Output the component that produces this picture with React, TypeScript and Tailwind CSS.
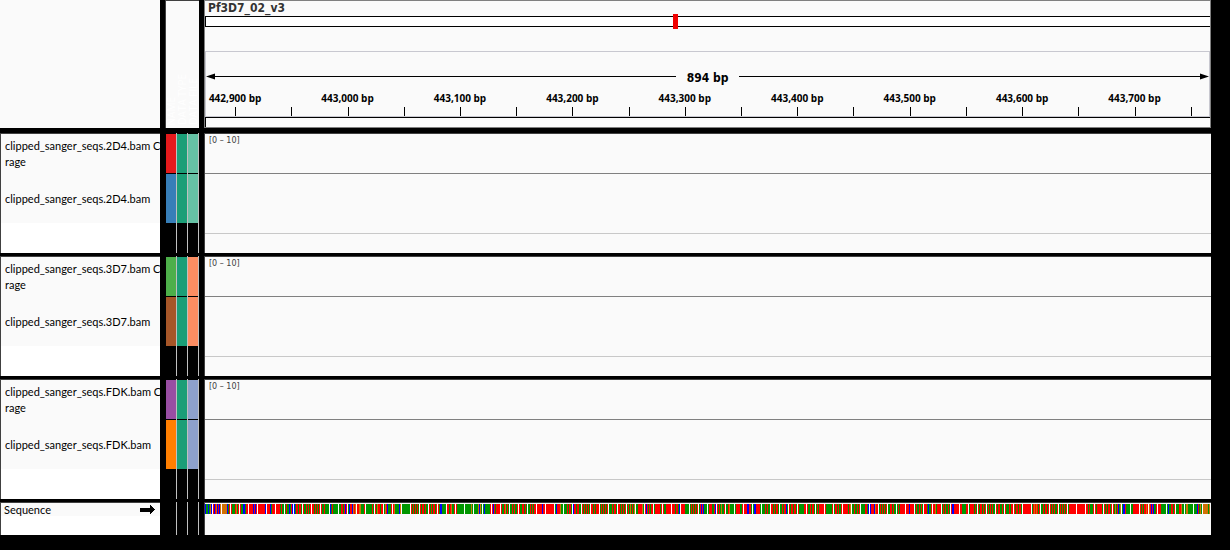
const sequence =
  'CAACAGC TCTGCTCG GGGGGCAT TAAATGAT TAACCATT TTTTCTCT TTTTTTTC TTTCATTT TTTTATAA ATAACATC ' +
  'CATTATTA TAATATAT TTATATAT TAATAAAA CATAAAAA AATTATCT ACTTCGTG TTGGAAAT AAAAAATA TAGTTATT ' +
  'AGTCAAAT TGAAAACG AAAAAAAA TATATATA TATTATAA TATATTAT TACCAAAA TTATGAAT TAAAAAAA AAAAAAGA ' +
  'AAAAGCGA ACAAAAAT TCTATTTT TAATGATA AATATAAT TAATTATA AATATATT TTTTTCTT TTTTTTTT ACTTTGAA ' +
  'AAATATTA CTTATTAA TATATATA TTATATTT ATATATAT AAATATTA TTATATAT ATAGATAG AATTTTGA TCTATATT ' +
  'ATTTTTAT TAATTTTT TTTATTAC TTTTAAAA ATATATAT ATCTCAAA ATTTAATC TATAGAAT AATGAAAA ATTTTAAT ' +
  'TTTCCTTA ACCTTTTA AAATATAA TTATATTA AATATTCA TATTATTA TAAAAATT TAATATTA ATATTTTT TAAAAAAT ' +
  'ATTATAAT TTTTTATG AATAATAT AAAATTAC CTTTCGTT ATATATAT AATTATAA ATATTTTT TTTCTTTT ATAATATA ' +
  'TTTACAAT TTGATTTT ATATAATA TCCTTTTT TTAAAATT ATTTTATA TATTATAT ATATATAA TATTAATA TAAATATT ' +
  'TATTATTA TTTTTTTT ATGTGTAT AATATTAT TATATAAT ATATATAT ATTTTTTT TTTTTTTT TTATAAAT TATTTTTA ' +
  'TATATTAT TAGATCAG ACCTAAAA AATTTTTT TATATTGT GTCTCAAT TTTAAAAA ACAATTAT AAATTGAA AGGAAAAA ' +
  'AAACTAGA GGGGGAG';

const baseColors: Record<string, string> = {
  A: '#009600',
  C: '#0000ff',
  G: '#d17105',
  T: '#ff0000',
  ' ': '#ffffff',
};

const axisLabels = [
  '442,900 bp', '443,000 bp', '443,100 bp', '443,200 bp', '443,300 bp',
  '443,400 bp', '443,500 bp', '443,600 bp', '443,700 bp',
];

const majorTick = (i: number) => `${(2.9 + i * 11.21).toFixed(2)}%`;
const minorTick = (i: number) => `${(8.5 + i * 11.21).toFixed(2)}%`;

type Sample = { file: string; coverage: string; reads: string; sample: string };

const samples: Sample[] = [
  { file: 'clipped_sanger_seqs.2D4.bam', coverage: 'bg-[#e41a1c]', reads: 'bg-[#377eb8]', sample: 'bg-[#66c2a5]' },
  { file: 'clipped_sanger_seqs.3D7.bam', coverage: 'bg-[#4daf4a]', reads: 'bg-[#a65628]', sample: 'bg-[#fc8d62]' },
  { file: 'clipped_sanger_seqs.FDK.bam', coverage: 'bg-[#984ea3]', reads: 'bg-[#ff7f00]', sample: 'bg-[#8da0cb]' },
];

const row = 'grid grid-cols-[160px_34px_minmax(0,1fr)] gap-x-[5px]';

function AttributeColumn({ colors }: { colors: string[] }) {
  return (
    <div className="flex flex-1 flex-col border-r border-[#c0c0c0] pt-px">
      {colors.length > 0 && <div className={`h-[39px] ${colors[0]}`} />}
      {colors.length > 0 && <div className={`mt-px h-[49px] ${colors[1]}`} />}
    </div>
  );
}

function Header() {
  return (
    <header className={`${row} h-[128px]`}>
      <div className="bg-[#fafafa]" />
      <div className="flex items-end border-l border-t border-[#404040] bg-[#fafafa] pb-[3px] text-[10px] leading-[11px] text-white">
        {['NAME', 'DATA TYPE', 'DATA FILE'].map((name) => (
          <div key={name} className="w-[11px] rotate-180 whitespace-nowrap [writing-mode:vertical-rl]">
            {name}
          </div>
        ))}
      </div>
      <div className="flex flex-col border border-[#808080] bg-[#fafafa]">
        <h1 className="h-[15px] pl-[3px] text-[12px] leading-[15px] font-bold text-[#333] [font-family:'DejaVu_Sans_Condensed','DejaVu_Sans',sans-serif]">
          Pf3D7_02_v3
        </h1>
        <div className="relative h-[11px] border-y border-l border-black bg-white">
          <div className="absolute -top-[3px] left-[46.5%] h-[15px] w-[5px] bg-[#f00000]" />
        </div>
        <div className="mt-6 h-[66px] border border-[#c8c8d0] pt-4">
          <div className="flex h-[17px] items-center text-[12px] font-bold">
            <svg className="h-[7px] w-[9px]" viewBox="0 0 9 7"><path d="M0 3.5 9 0.5v6Z" /></svg>
            <div className="h-px flex-1 bg-black" />
            <div className="w-[63px] pt-[3px] text-center leading-[17px] [font-family:'DejaVu_Sans_Condensed','DejaVu_Sans',sans-serif]">
              894 bp
            </div>
            <div className="h-px flex-1 bg-black" />
            <svg className="h-[7px] w-[9px]" viewBox="0 0 9 7"><path d="M9 3.5 0 0.5v6Z" /></svg>
          </div>
          <svg className="block h-[31px] w-full text-[10px] font-bold" shapeRendering="crispEdges">
            {axisLabels.map((label, i) => (
              <g key={label}>
                <text x={majorTick(i)} y="17" textAnchor="middle">{label}</text>
                <rect x={majorTick(i)} y="22" width="1" height="9" />
                <rect x={minorTick(i)} y="22" width="1" height="9" />
              </g>
            ))}
          </svg>
        </div>
        <div className="flex-1 border-l border-t border-black" />
      </div>
    </header>
  );
}

function SamplePanel({ file, coverage, reads, sample }: Sample) {
  return (
    <section className={`${row} h-[120px]`}>
      <div className="overflow-hidden border-l border-t border-[#404040] bg-white text-[11px] leading-4 whitespace-nowrap [font-family:Lato,sans-serif]">
        <div className="h-10 bg-[#fafafa] pt-1 pl-1">
          <div>{file} C</div>
          <div>rage</div>
        </div>
        <div className="flex h-[49px] items-center bg-[#fafafa] pl-1">{file}</div>
      </div>
      <div className="flex pl-px">
        <AttributeColumn colors={[coverage, reads]} />
        <AttributeColumn colors={['bg-[#1b9e77]', 'bg-[#1b9e77]']} />
        <AttributeColumn colors={[sample, sample]} />
      </div>
      <div className="border-l border-t border-[#404040] bg-[#fafafa]">
        <div className="h-10 border-b border-[#808080] pt-px pl-1 text-[8px] leading-[12px] text-[#404040] [font-family:'DejaVu_Sans',sans-serif]">
          [0 – 10]
        </div>
        <div className="h-[60px] border-b border-[#c8c8c8]" />
      </div>
    </section>
  );
}

function SequencePanel() {
  return (
    <section className={`${row} h-[33px]`}>
      <div className="border-l border-t border-[#404040] bg-white">
        <div className="flex h-[13px] items-center justify-between bg-[#fafafa] pr-[5px] pl-[3px] text-[11px] leading-[13px] [font-family:Lato,sans-serif]">
          Sequence
          <svg className="h-[9px] w-[15px]" viewBox="0 0 15 9" shapeRendering="crispEdges">
            <path d="M0 2.5H10V0L15 4.5 10 9V6.5H0Z" />
          </svg>
        </div>
      </div>
      <div className="flex pl-px">
        <AttributeColumn colors={[]} />
        <AttributeColumn colors={[]} />
        <AttributeColumn colors={[]} />
      </div>
      <div className="border-l border-t border-[#404040] bg-[#fafafa] pt-px pr-px">
        <svg
          className="block h-[10px] w-full"
          viewBox={`0 0 ${sequence.length} 10`}
          preserveAspectRatio="none"
          shapeRendering="crispEdges"
        >
          {sequence.split('').map((base, i) => (
            <rect key={i} x={i} width="1" height="10" fill={baseColors[base]} />
          ))}
        </svg>
      </div>
    </section>
  );
}

export default function App() {
  return (
    <main className="flex min-h-screen flex-col gap-[3px] bg-black pr-[19px] text-black [font-family:'Open_Sans',sans-serif]">
      <div className="pb-[2px]">
        <Header />
      </div>
      {samples.map((sample) => (
        <SamplePanel key={sample.file} {...sample} />
      ))}
      <SequencePanel />
    </main>
  );
}
